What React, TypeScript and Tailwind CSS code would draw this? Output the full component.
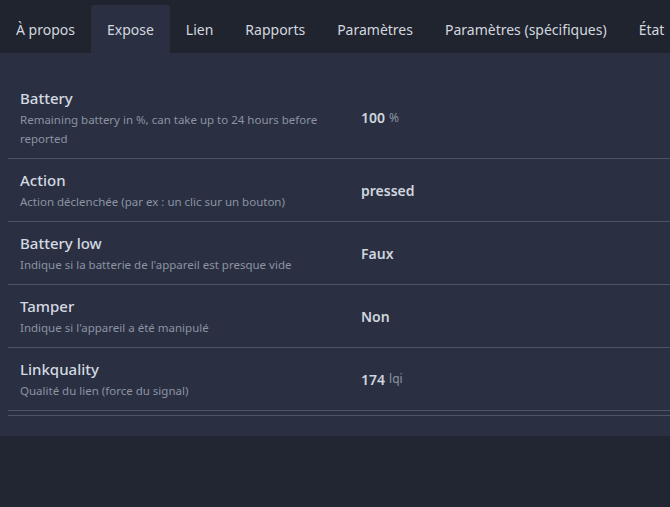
import React from "react";

const tabs = ["À propos", "Expose", "Lien", "Rapports", "Paramètres", "Paramètres (spécifiques)", "État"];

const rows: { title: string; desc: string; value: string; unit?: string }[] = [
  { title: "Battery", desc: "Remaining battery in %, can take up to 24 hours before reported", value: "100", unit: "%" },
  { title: "Action", desc: "Action déclenchée (par ex : un clic sur un bouton)", value: "pressed" },
  { title: "Battery low", desc: "Indique si la batterie de l'appareil est presque vide", value: "Faux" },
  { title: "Tamper", desc: "Indique si l'appareil a été manipulé", value: "Non" },
  { title: "Linkquality", desc: "Qualité du lien (force du signal)", value: "174", unit: "lqi" },
];

export default function App() {
  return (
    <div
      className="w-[670px] h-[507px] overflow-hidden bg-[#222632]"
      style={{ fontFamily: '"Noto Sans", "Open Sans", sans-serif' }}
    >
      <div className="flex pt-[5px] bg-[#20242f] whitespace-nowrap">
        {tabs.map((t) => (
          <div
            key={t}
            className={
              "h-[48px] px-4 flex items-center text-[14px] text-[#d3d7df] rounded-t-[3px] " +
              (t === "Expose" ? "bg-[#2a3042]" : "")
            }
          >
            {t}
          </div>
        ))}
      </div>
      <div className="bg-[#2a3042] pl-2 pt-[24px] pb-[20px]">
        <div className="border-b border-[#4c5366] pb-[4px]">
          {rows.map((r) => (
            <div key={r.title} className="flex border-b border-[#4c5366]">
              <div className="w-[341px] shrink-0 px-3 pt-[10px] pb-[10px]">
                <div className="text-[15px] leading-[23px] font-medium text-[#d5d9e1]">{r.title}</div>
                <div className="text-[11.5px] leading-[19px] text-[#8c93a3] pr-[4px]">{r.desc}</div>
              </div>
              <div className="flex-1 px-3 flex items-center">
                <span className="text-[14px] font-semibold text-[#d0d5de]">{r.value}</span>
                {r.unit && <span className="ml-[4px] text-[12px] text-[#8c93a3]">{r.unit}</span>}
              </div>
            </div>
          ))}
        </div>
      </div>
    </div>
  );
}
